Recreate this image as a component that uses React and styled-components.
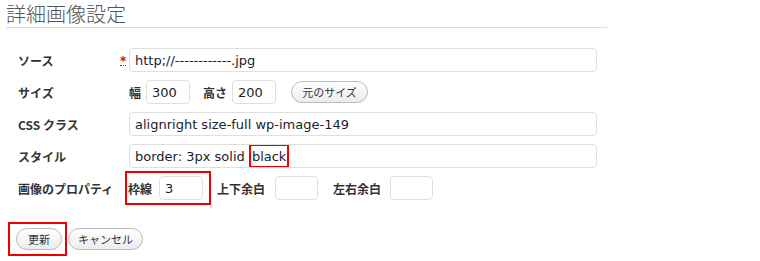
import React from "react";
import styled, { createGlobalStyle } from "styled-components";

const GlobalStyle = createGlobalStyle`
  body {
    margin: 0;
    background: #fff;
    font-family: "Noto Sans CJK JP", "DejaVu Sans", sans-serif;
  }
`;

const Page = styled.div`
  width: 760px;
  height: 261px;
  padding-left: 6px;
  box-sizing: border-box;
  overflow: hidden;
`;

const Title = styled.h2`
  margin: 0;
  width: 601px;
  font-size: 20px;
  font-weight: 300;
  line-height: 27px;
  color: #555;
  border-bottom: 1px solid #dcdcdc;
  font-family: "Noto Sans CJK JP", sans-serif;
`;

const Form = styled.div`
  display: grid;
  grid-template-columns: 102px 9px 468px;
  grid-auto-rows: 24px;
  row-gap: 8px;
  margin: 20px 0 0 12px;
`;

const Label = styled.div`
  display: flex;
  align-items: center;
  font-size: 12px;
  font-weight: bold;
  color: #333;
  white-space: nowrap;
`;

const Required = styled.abbr`
  align-self: center;
  justify-self: start;
  margin-top: 3px;
  color: #e00;
  font-size: 12px;
  font-weight: bold;
  line-height: 8px;
  text-decoration: none;
  border-bottom: 1px dotted #e00;
  font-family: "DejaVu Sans", sans-serif;
`;

const Cell = styled.div`
  grid-column: ${(p) => (p.$full ? "2 / 4" : "3")};
  display: flex;
  align-items: center;
  min-width: 0;
`;

const Field = styled.div`
  box-sizing: border-box;
  width: ${(p) => p.$w || "100%"};
  height: ${(p) => p.$h || "24px"};
  display: flex;
  align-items: center;
  padding: 0 5px;
  border: 1px solid #dfdfdf;
  border-radius: 4px;
  background: #fff;
  font-family: "DejaVu Sans", sans-serif;
  font-size: 13px;
  color: #1c1c2a;
  white-space: pre;
  overflow: hidden;
`;

const Mark = styled.span`
  align-self: stretch;
  display: flex;
  align-items: center;
  margin: -1px 0;
  padding: 0 1px;
  border: 2px solid #e00;
`;

const Small = styled.span`
  font-size: 12px;
  font-weight: bold;
  color: #333;
  white-space: nowrap;
  margin: ${(p) => p.$m || "0"};
`;

const Highlight = styled.div`
  display: flex;
  align-items: center;
  border: 2px solid #e00;
  padding: 3px 6px 3px 1px;
  margin: -5px 0 -5px -4px;
`;

const Button = styled.button`
  box-sizing: border-box;
  height: 22px;
  width: ${(p) => p.$w};
  margin: ${(p) => p.$m || "0"};
  padding: 0;
  border: 1px solid #bbb;
  border-radius: 11px;
  background: linear-gradient(#fff, #ececec);
  color: #333;
  font-size: 11px;
  font-family: "Noto Sans CJK JP", sans-serif;
  cursor: pointer;
`;

const Actions = styled.div`
  display: flex;
  align-items: center;
  margin: 28px 0 0 10px;
`;

const ButtonMark = styled.div`
  display: flex;
  border: 2px solid #e00;
  padding: 4px 3px 4px 6px;
  margin: -6px 1px -6px -8px;
`;

export default function App() {
  return (
    <Page>
      <GlobalStyle />
      <Title>詳細画像設定</Title>
      <Form>
        <Label>ソース</Label>
        <Required title="必須">*</Required>
        <Cell>
          <Field>http;//------------.jpg</Field>
        </Cell>

        <Label>サイズ</Label>
        <Cell $full>
          <Small $m="0 5px 0 9px">幅</Small>
          <Field $w="44px">300</Field>
          <Small $m="0 5px 0 13px">高さ</Small>
          <Field $w="44px">200</Field>
          <Button $w="77px" $m="0 0 0 15px">元のサイズ</Button>
        </Cell>

        <Label>CSS クラス</Label>
        <Cell>
          <Field>alignright size-full wp-image-149</Field>
        </Cell>

        <Label>スタイル</Label>
        <Cell>
          <Field>
            border: 3px solid <Mark>black</Mark>
          </Field>
        </Cell>

        <Label>画像のプロパティ</Label>
        <Cell>
          <Highlight>
            <Small $m="0 7px 0 0">枠線</Small>
            <Field $w="44px">3</Field>
          </Highlight>
          <Small $m="0 10px 0 6px">上下余白</Small>
          <Field $w="43px" />
          <Small $m="0 9px 0 15px">左右余白</Small>
          <Field $w="43px" />
        </Cell>
      </Form>
      <Actions>
        <ButtonMark>
          <Button $w="46px">更新</Button>
        </ButtonMark>
        <Button $w="75px">キャンセル</Button>
      </Actions>
    </Page>
  );
}
